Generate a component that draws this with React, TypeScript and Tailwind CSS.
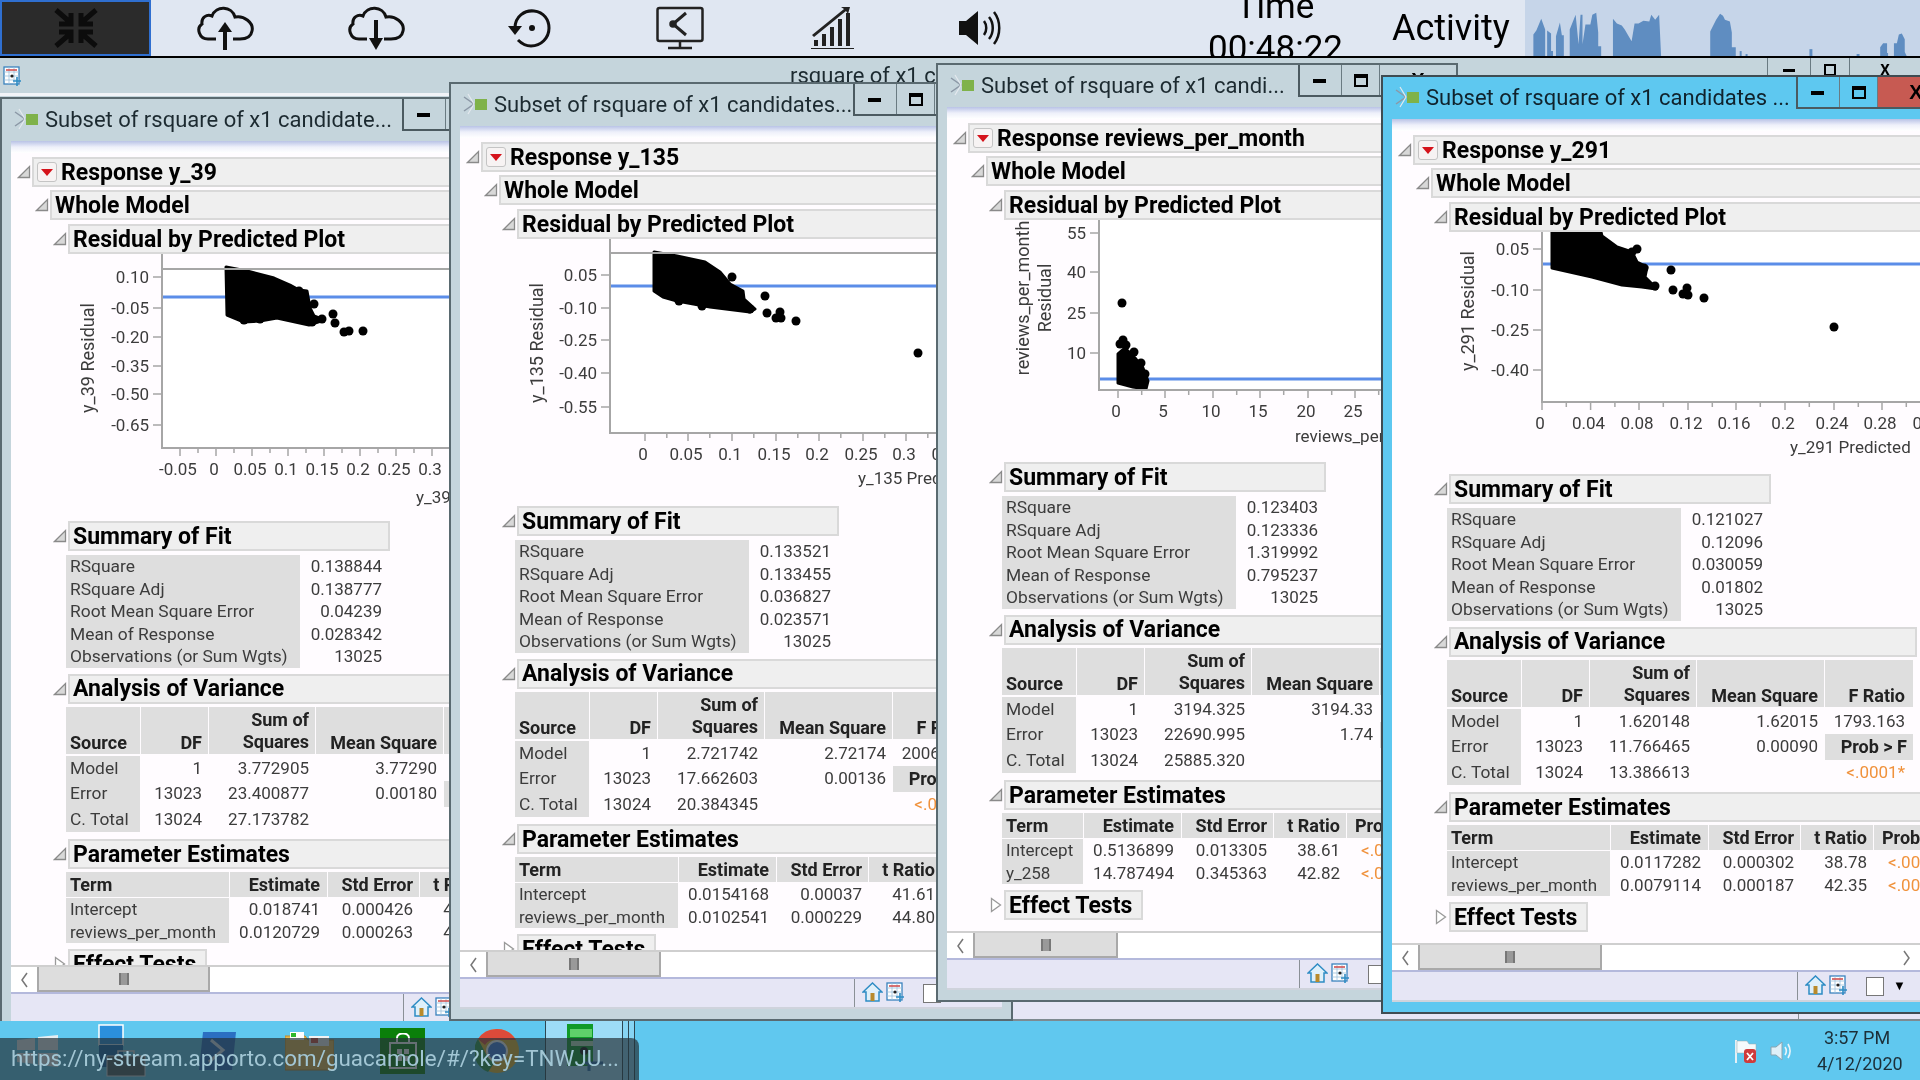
import type { ReactNode } from "react";

type Tick = { label: string; at: number };

type PlotProps = {
  svgH: number;
  left: number;
  top: number;
  h: number;
  blueY: number;
  yTicks: Tick[];
  xTicks: Tick[];
  xStep: number;
  xLabel: string;
  xLabelX: number;
  xLabelDy: number;
  yLabels: { text: string; x: number; y: number }[];
  blob: string;
  dots: number[][];
};

type WinData = {
  title: string;
  response: string;
  pos: string;
  titleW: string;
  statusW: string;
  active?: boolean;
  thumb: string;
  plot: PlotProps;
  fit: string[];
  anova: string[][];
  termCols: string;
  params: string[][];
};

const fitLabels = ["RSquare", "RSquare Adj", "Root Mean Square Error", "Mean of Response", "Observations (or Sum Wgts)"];

const ticks = (list: [string, number][]): Tick[] => list.map(([label, at]) => ({ label, at }));

const windows: WinData[] = [
  {
    title: "Subset of rsquare of x1 candidate...",
    response: "Response y_39",
    pos: "left-0 top-[39px] w-[562px]",
    titleW: "w-[400px]",
    statusW: "w-[393px]",
    thumb: "w-[173px]",
    plot: {
      svgH: 267, left: 151, top: 15, h: 179, blueY: 28,
      yTicks: ticks([["0.10", 8], ["-0.05", 39], ["-0.20", 68], ["-0.35", 97], ["-0.50", 125], ["-0.65", 156]]),
      xTicks: ticks([["-0.05", 18], ["0", 54], ["0.05", 90], ["0.1", 126], ["0.15", 162], ["0.2", 198], ["0.25", 234], ["0.3", 270]]),
      xStep: 36,
      xLabel: "y_39 Predicted",
      xLabelX: 254,
      xLabelDy: 55,
      yLabels: [{ text: "y_39 Residual", x: -74, y: 89 }],
      blob: "64,-2 85,2 112,9 128,16 137,21 145,22 148,39 152,47 162,51 147,56 115,49 98,52 82,53 65,46",
      dots: [[152, 35], [171, 45], [173, 54], [182, 63], [187, 62], [201, 62], [137, 22], [150, 53], [82, 51], [98, 50], [160, 50]],
    },
    fit: ["0.138844", "0.138777", "0.04239", "0.028342", "13025"],
    anova: [["Model", "1", "3.772905", "3.77290", "2096.100"], ["Error", "13023", "23.400877", "0.00180", "Prob > F"], ["C. Total", "13024", "27.173782", "", "<.0001*"]],
    termCols: "grid-cols-[163px_97px_91px_72px_100px]",
    params: [["Intercept", "0.018741", "0.000426", "43.99", "<.0001*"], ["reviews_per_month", "0.0120729", "0.000263", "45.90", "<.0001*"]],
  },
  {
    title: "Subset of rsquare of x1 candidates...",
    response: "Response y_135",
    pos: "left-[449px] top-[24px] w-[564px]",
    titleW: "w-[402px]",
    statusW: "w-[395px]",
    thumb: "w-[175px]",
    plot: {
      svgH: 267, left: 150, top: 14, h: 180, blueY: 33,
      yTicks: ticks([["0.05", 22], ["-0.10", 55], ["-0.25", 87], ["-0.40", 120], ["-0.55", 154]]),
      xTicks: ticks([["0", 35], ["0.05", 78], ["0.1", 122], ["0.15", 166], ["0.2", 209], ["0.25", 253], ["0.3", 296], ["0.35", 340]]),
      xStep: 43.6,
      xLabel: "y_135 Predicted",
      xLabelX: 248,
      xLabelDy: 51,
      yLabels: [{ text: "y_135 Residual", x: -73, y: 90 }],
      blob: "44,-1 67,3 95,9 110,19 120,31 133,38 134,46 145,56 140,59 100,54 67,48 53,44 44,38",
      dots: [[122, 24], [155, 43], [157, 60], [170, 59], [166, 65], [171, 65], [186, 68], [308, 100], [140, 56], [92, 53], [69, 48]],
    },
    fit: ["0.133521", "0.133455", "0.036827", "0.023571", "13025"],
    anova: [["Model", "1", "2.721742", "2.72174", "2006.437"], ["Error", "13023", "17.662603", "0.00136", "Prob > F"], ["C. Total", "13024", "20.384345", "", "<.0001*"]],
    termCols: "grid-cols-[163px_97px_91px_72px_100px]",
    params: [["Intercept", "0.0154168", "0.00037", "41.61", "<.0001*"], ["reviews_per_month", "0.0102541", "0.000229", "44.80", "<.0001*"]],
  },
  {
    title: "Subset of rsquare of x1 candi...",
    response: "Response reviews_per_month",
    pos: "left-[936px] top-[5px] w-[522px]",
    titleW: "w-[360px]",
    statusW: "w-[353px]",
    thumb: "w-[145px]",
    plot: {
      svgH: 242, left: 152, top: 0, h: 170, blueY: 159,
      yTicks: ticks([["55", 13], ["40", 52], ["25", 93], ["10", 133]]),
      xTicks: ticks([["0", 19], ["5", 66], ["10", 114], ["15", 161], ["20", 209], ["25", 256]]),
      xStep: 47.4,
      xLabel: "reviews_per_month Predicted",
      xLabelX: 196,
      xLabelDy: 52,
      yLabels: [{ text: "reviews_per_month", x: -76, y: 78 }, { text: "Residual", x: -54, y: 78 }],
      blob: "19,134 26,128 36,138 44,148 49,161 47,169 34,167 19,163",
      dots: [[23, 83], [24, 120], [21, 124], [27, 125], [35, 132], [42, 143], [46, 154]],
    },
    fit: ["0.123403", "0.123336", "1.319992", "0.795237", "13025"],
    anova: [["Model", "1", "3194.325", "3194.33", "1629.800"], ["Error", "13023", "22690.995", "1.74", "Prob > F"], ["C. Total", "13024", "25885.320", "", "<.0001*"]],
    termCols: "grid-cols-[81px_97px_91px_72px_100px]",
    params: [["Intercept", "0.5136899", "0.013305", "38.61", "<.0001*"], ["y_258", "14.787494", "0.345363", "42.82", "<.0001*"]],
  },
  {
    title: "Subset of rsquare of x1 candidates ...",
    response: "Response y_291",
    pos: "left-[1381px] top-[17px] w-[550px]",
    titleW: "w-[413px]",
    statusW: "w-[406px]",
    active: true,
    thumb: "w-[184px]",
    plot: {
      svgH: 242, left: 150, top: 0, h: 170, blueY: 32,
      yTicks: ticks([["0.05", 17], ["-0.10", 58], ["-0.25", 98], ["-0.40", 138]]),
      xTicks: ticks([["0", 0], ["0.04", 48.6], ["0.08", 97], ["0.12", 146], ["0.16", 194], ["0.2", 243], ["0.24", 292], ["0.28", 340], ["0.32", 389]]),
      xStep: 48.6,
      xLabel: "y_291 Predicted",
      xLabelX: 248,
      xLabelDy: 51,
      yLabels: [{ text: "y_291 Residual", x: -74, y: 79 }],
      blob: "10,0 59,0 60,4 75,15 90,20 95,30 105,35 103,45 113,55 114,57 100,55 80,53 50,45 10,36",
      dots: [[95, 17], [90, 20], [129, 38], [131, 58], [145, 56], [141, 62], [146, 63], [162, 66], [292, 95], [113, 54], [102, 36]],
    },
    fit: ["0.121027", "0.12096", "0.030059", "0.01802", "13025"],
    anova: [["Model", "1", "1.620148", "1.62015", "1793.163"], ["Error", "13023", "11.766465", "0.00090", "Prob > F"], ["C. Total", "13024", "13.386613", "", "<.0001*"]],
    termCols: "grid-cols-[163px_97px_91px_72px_100px]",
    params: [["Intercept", "0.0117282", "0.000302", "38.78", "<.0001*"], ["reviews_per_month", "0.0079114", "0.000187", "42.35", "<.0001*"]],
  },
];

function Disclosure({ open = true }: { open?: boolean }) {
  return (
    <svg width="14" height="16" viewBox="0 0 14 16" className="shrink-0">
      {open ? (
        <path d="M12.5 2.5 V13.5 H1.5 Z" fill="#d8d8d8" stroke="#8a8a8a" strokeWidth="1.3" />
      ) : (
        <path d="M2.5 1.5 L11.5 8 L2.5 14.5 Z" fill="#fff" stroke="#9a9a9a" strokeWidth="1.3" />
      )}
    </svg>
  );
}

function Section({ title, indent, width, open = true, menu, className = "" }: { title: string; indent: string; width: string; open?: boolean; menu?: boolean; className?: string }) {
  return (
    <div className={`flex items-center gap-[1px] ${indent} ${className}`}>
      <Disclosure open={open} />
      <div className={`flex h-[30px] items-center gap-[4px] whitespace-nowrap border-2 border-[#d9d9d9] bg-[#efefef] pl-[3px] text-[23px] font-bold leading-none text-black ${width}`}>
        {menu && (
          <span className="flex h-[20px] w-[20px] shrink-0 items-center justify-center rounded-[3px] border border-[#c4c4c4] bg-[#f7f3f3]">
            <svg width="12" height="7" viewBox="0 0 12 7">
              <path d="M0 0 H12 L6 7 Z" fill="#d5131b" />
            </svg>
          </span>
        )}
        <span>{title}</span>
      </div>
    </div>
  );
}

function Plot({ svgH, left, top, h, blueY, yTicks, xTicks, xStep, xLabel, xLabelX, xLabelDy, yLabels, blob, dots }: PlotProps) {
  const minors = xTicks.map((t) => t.at + xStep / 2);
  return (
    <svg width="540" height={svgH} className="block shrink-0 text-[17px]">
      <g transform={`translate(${left} ${top})`}>
        <rect x="0" y="0" width="400" height={h} fill="#ffffff" />
        <line x1="0" x2="400" y1={blueY} y2={blueY} stroke="#5b8de8" strokeWidth="3" />
        <polygon points={blob} fill="#000" stroke="#000" strokeWidth="3" strokeLinejoin="round" />
        {dots.map(([x, y]) => (
          <circle key={`${x}-${y}`} cx={x} cy={y} r="4.5" fill="#000" />
        ))}
        <path d={`M0 -${top} V${h} H400`} fill="none" stroke="#a6a6a6" strokeWidth="2" />
        {top > 0 && <line x1="0" x2="400" y1="0" y2="0" stroke="#a6a6a6" strokeWidth="2" />}
        {yTicks.map((t) => (
          <g key={t.label}>
            <line x1="-9" x2="0" y1={t.at} y2={t.at} stroke="#a6a6a6" strokeWidth="1.5" />
            <text x="-13" y={t.at + 6} textAnchor="end" fill="#3c3c3c">{t.label}</text>
          </g>
        ))}
        {xTicks.map((t) => (
          <g key={t.label}>
            <line x1={t.at} x2={t.at} y1={h} y2={h + 8} stroke="#a6a6a6" strokeWidth="1.5" />
            <text x={t.at - 2} y={h + 27} textAnchor="middle" fill="#3c3c3c">{t.label}</text>
          </g>
        ))}
        {minors.map((x) => (
          <line key={x} x1={x} x2={x} y1={h} y2={h + 5} stroke="#a6a6a6" strokeWidth="1.5" />
        ))}
        <text x={xLabelX} y={h + xLabelDy} fill="#3c3c3c">{xLabel}</text>
        {yLabels.map((l) => (
          <text key={l.text} transform={`translate(${l.x + 6} ${l.y}) rotate(-90)`} textAnchor="middle" fill="#3c3c3c" className="text-[18px]">{l.text}</text>
        ))}
      </g>
    </svg>
  );
}

function FitTable({ values }: { values: string[] }) {
  return (
    <div className="ml-[55px] mt-[4px] grid w-fit grid-cols-[234px_82px] text-[17.4px] leading-[22.6px] text-[#3c3c3c]">
      {fitLabels.map((label, i) => (
        <div key={label} className="contents">
          <div className="h-[22.6px] whitespace-nowrap bg-[#dedede] pl-[4px]">{label}</div>
          <div className="h-[22.6px] text-right text-[17px]">{values[i]}</div>
        </div>
      ))}
    </div>
  );
}

function AnovaTable({ rows }: { rows: string[][] }) {
  return (
    <div className="ml-[55px] mt-[3px] text-[18px] text-[#3c3c3c]">
      <div className="grid w-fit grid-cols-[74px_67px_106px_127px_88px] gap-x-[1px] font-bold leading-[22px] text-[#222]">
        <div className="flex h-[47px] items-end bg-[#dedede] pl-[4px]">Source</div>
        <div className="flex h-[47px] items-end justify-end bg-[#dedede] pr-[6px]">DF</div>
        <div className="h-[47px] bg-[#dedede] pr-[6px] pt-[2px] text-right">Sum of<br />Squares</div>
        <div className="flex h-[47px] items-end justify-end bg-[#dedede] pr-[6px]">Mean Square</div>
        <div className="flex h-[47px] items-end justify-end bg-[#dedede] pr-[8px]">F Ratio</div>
      </div>
      <div className="mt-[2px] grid w-fit grid-cols-[74px_67px_106px_127px_88px] gap-x-[1px] text-[17px] leading-[25.4px]">
        {rows.map((r) => (
          <div key={r[0]} className="contents">
            <div className="h-[25.4px] bg-[#dedede] pl-[4px] text-[17.4px]">{r[0]}</div>
            <div className="h-[25.4px] pr-[6px] text-right">{r[1]}</div>
            <div className="h-[25.4px] pr-[6px] text-right">{r[2]}</div>
            <div className="h-[25.4px] pr-[6px] text-right">{r[3]}</div>
            {r[4] === "Prob > F" ? (
              <div className="h-[25.4px] bg-[#dedede] pr-[6px] text-right text-[18px] font-bold text-[#222]">{r[4]}</div>
            ) : r[4].startsWith("<") ? (
              <div className="h-[25.4px] pr-[8px] text-right text-[#f0923c]">{r[4]}</div>
            ) : (
              <div className="h-[25.4px] pr-[8px] text-right">{r[4]}</div>
            )}
          </div>
        ))}
      </div>
    </div>
  );
}

function ParamTable({ cols, rows }: { cols: string; rows: string[][] }) {
  return (
    <div className="ml-[55px] mt-[3px] text-[18px] text-[#3c3c3c]">
      <div className={`grid w-fit gap-x-[1px] font-bold leading-[25px] text-[#222] ${cols}`}>
        <div className="h-[25px] bg-[#dedede] pl-[4px]">Term</div>
        <div className="h-[25px] bg-[#dedede] pr-[7px] text-right">Estimate</div>
        <div className="h-[25px] bg-[#dedede] pr-[6px] text-right">Std Error</div>
        <div className="h-[25px] bg-[#dedede] pr-[6px] text-right">t Ratio</div>
        <div className="h-[25px] whitespace-nowrap bg-[#dedede] pl-[8px]">Prob&gt;|t|</div>
      </div>
      <div className={`mt-[1px] grid w-fit gap-x-[1px] text-[17px] leading-[22.6px] ${cols}`}>
        {rows.map((r) => (
          <div key={r[0]} className="contents">
            <div className="h-[22.6px] whitespace-nowrap bg-[#dedede] pl-[4px]">{r[0]}</div>
            <div className="h-[22.6px] pr-[7px] text-right">{r[1]}</div>
            <div className="h-[22.6px] pr-[6px] text-right">{r[2]}</div>
            <div className="h-[22.6px] pr-[6px] text-right">{r[3]}</div>
            <div className="h-[22.6px] pl-[14px] text-[#f0923c]">{r[4]}</div>
          </div>
        ))}
      </div>
    </div>
  );
}

function ReportIcon() {
  return (
    <svg width="26" height="24" viewBox="0 0 26 24" className="shrink-0">
      <path d="M1 5 L11 12 L1 19" fill="none" stroke="#8c98a6" strokeWidth="1.5" />
      <path d="M5 2 L11 12 L5 22" fill="none" stroke="#e4e9ee" strokeWidth="1.2" />
      <rect x="12" y="7" width="12" height="11" fill="#7fb24a" />
    </svg>
  );
}

function HomeIcon() {
  return (
    <svg width="21" height="20" viewBox="0 0 21 20" className="shrink-0">
      <path d="M10.5 1 L20 10 H17 V19 H4 V10 H1 Z" fill="#dff0fa" stroke="#2e8cc4" strokeWidth="1.5" />
      <rect x="8.5" y="11" width="4" height="8" fill="#b98a2a" />
    </svg>
  );
}

function GridIcon({ className = "" }: { className?: string }) {
  return (
    <svg width="20" height="20" viewBox="0 0 20 20" className={`shrink-0 ${className}`}>
      <rect x="1" y="1" width="15" height="17" fill="#fff" stroke="#3b83bd" strokeWidth="1.3" />
      <path d="M1 6 H16 M1 10 H16 M1 14 H16 M6 1 V18 M11 1 V18" stroke="#9cc0dc" strokeWidth="0.8" />
      <path d="M3 4 H14" stroke="#d05050" strokeWidth="1.6" />
      <circle cx="9" cy="10" r="1.6" fill="#222" />
      <path d="M14 11 V20 M10 15 H18" stroke="#2e8cc4" strokeWidth="1.6" />
    </svg>
  );
}

function WinButtons({ active }: { active?: boolean }) {
  return (
    <div className={`flex h-[32px] shrink-0 border-b-2 border-l-2 border-r-2 border-[#4b5a60] ${active ? "bg-[#5ec8f0]" : "bg-[#c5d5dc]"}`}>
      <div className="flex w-[42px] items-center justify-center border-r border-[#6a7b82] pr-[3px]">
        <span className="mt-[2px] h-[4px] w-[13px] bg-black" />
      </div>
      <div className="flex w-[38px] items-center justify-center border-r border-[#6a7b82]">
        <span className="h-[13px] w-[14px] border-2 border-t-4 border-black" />
      </div>
      <div className={`flex w-[76px] items-center justify-center text-[20px] font-bold text-black ${active ? "bg-[#c75a52]" : ""}`}>
        <span className="font-['Liberation_Sans',sans-serif]">X</span>
      </div>
    </div>
  );
}

function JmpWindow({ w }: { w: WinData }) {
  return (
    <div className={`absolute h-[939px] border-2 ${w.pos} ${w.active ? "border-[#3f4c52] bg-[#5ec8f0]" : "border-[#5a6a70] bg-[#c5d5dc]"}`}>
      <div className="flex h-[42px] items-start overflow-hidden">
        <div className={`flex h-[40px] shrink-0 items-center gap-[5px] overflow-hidden whitespace-nowrap pl-[12px] text-[22px] ${w.titleW} ${w.active ? "text-[#10222c]" : "text-[#1c2a30]"}`}>
          <ReportIcon />
          <span>{w.title}</span>
        </div>
        <WinButtons active={w.active} />
      </div>
      <div className="mx-[9px] h-[851px] bg-white">
        <div className="h-[12px] bg-gradient-to-b from-[#b9c3e6] via-[#eef0fa] to-white" />
        <div className="h-[812px] overflow-hidden bg-[#fffcff]">
          <div className="w-[539px] pt-[4px]">
            <Section title={w.response} indent="pl-[6px]" width="flex-1" menu />
            <Section title="Whole Model" indent="pl-[24px] mt-[3px]" width="flex-1" />
            <Section title="Residual by Predicted Plot" indent="pl-[42px] mt-[4px]" width="flex-1" />
            <Plot {...w.plot} />
            <Section title="Summary of Fit" indent="pl-[42px]" width="w-[322px]" />
            <FitTable values={w.fit} />
            <Section title="Analysis of Variance" indent="pl-[42px] mt-[6px]" width="w-[468px]" />
            <AnovaTable rows={w.anova} />
            <Section title="Parameter Estimates" indent="pl-[42px] mt-[7px]" width="flex-1" />
            <ParamTable cols={w.termCols} rows={w.params} />
            <Section title="Effect Tests" indent="pl-[42px] mt-[6px]" width="w-[139px]" open={false} />
          </div>
        </div>
        <div className="flex h-[27px] border-t-2 border-[#cfcfcf] bg-white">
          <div className="flex w-[26px] items-center justify-center text-[#666]">
            <svg width="8" height="16" viewBox="0 0 8 16"><path d="M7 1 L2 8 L7 15" fill="none" stroke="#777" strokeWidth="1.5" /></svg>
          </div>
          <div className={`flex h-[25px] items-center justify-center border-x-2 border-b-2 border-[#a9a9a9] bg-[#dddddd] ${w.thumb}`}>
            <span className="h-[12px] w-[10px] border-x-2 border-[#777] bg-[#999]" />
          </div>
          <div className="flex-1" />
          <div className="flex w-[26px] items-center justify-center">
            <svg width="8" height="16" viewBox="0 0 8 16"><path d="M1 1 L6 8 L1 15" fill="none" stroke="#777" strokeWidth="1.5" /></svg>
          </div>
        </div>
      </div>
      <div className="mx-[9px] h-[32px] border-t-2 border-b-2 border-t-[#b4b9dc] border-b-[#cfd3dc] bg-[#e6e6f5]">
        <div className="flex h-full">
          <div className={`h-full shrink-0 border-r border-[#8a9096] ${w.statusW}`} />
          <div className="flex h-full items-start pl-[7px] pt-[3px]">
            <HomeIcon />
            <GridIcon className="ml-[3px]" />
            <span className="ml-[17px] mt-[2px] h-[19px] w-[18px] shrink-0 border border-[#777] bg-white" />
            <span className="ml-[9px] mt-[4px] text-[13px] leading-none text-black">▼</span>
          </div>
        </div>
      </div>
    </div>
  );
}

const activityPaths = [
  "M0 57 V35 L3 31 L8 19 L12 30 V57 Z",
  "M14 57 V31 L18 34 V52 H20 V57 Z",
  "M23 57 V37 L27 23 L29 36 H31 V57 Z",
  "M37 57 V30 L43 15 L46 45 L48 15 H50 V45 L53 25 H58 L60 15 L64 13 L66 33 V47 H69 V57 Z",
  "M81 57 V19 L85 24 L90 26 L93 30 L97 37 L100 42 L103 24 L107 24 L112 21 L118 22 L120 15 L124 20 L128 15 L130 57 Z",
  "M180 57 V32 L186 20 L190 14 L193 16 L195 20 L200 22 L202 33 V48 H206 V57 Z",
  "M210 57 V52 H212 V57 Z",
  "M216 57 V55 H218 V57 Z",
  "M281 57 V50 H284 V57 Z",
  "M329 57 V55 H332 V57 Z",
  "M353 57 V48 L356 44 H360 V54 H361 V57 Z",
  "M367 57 V44 H370 L372 35 L375 34 L378 40 V53 L380 57 Z",
];

function TopCell({ w, children }: { w: string; children: ReactNode }) {
  return <div className={`flex h-full shrink-0 items-center justify-center ${w}`}>{children}</div>;
}

function TopBar() {
  return (
    <div className="flex h-[58px] shrink-0 items-center overflow-hidden border-b-2 border-black bg-[#e0e7f2] text-[35px] text-black">
      <div className="flex h-full w-[151px] shrink-0 items-center justify-center border-2 border-[#2f6fd0] bg-[#2b2b2b]">
        <svg width="46" height="40" viewBox="0 0 46 40" fill="none" stroke="#0c0c0c" strokeWidth="5">
          <path d="M3 2 L18 15 M18 5 V16 H6" />
          <path d="M43 2 L28 15 M28 5 V16 H40" />
          <path d="M3 38 L18 25 M18 35 V24 H6" />
          <path d="M43 38 L28 25 M28 35 V24 H40" />
        </svg>
      </div>
      <TopCell w="w-[149px]">
        <svg width="60" height="44" viewBox="0 0 60 44" fill="none" stroke="#111" strokeWidth="3">
          <path d="M20 33 H12 C3 33 0 22 6 18 C5 11 11 8 16 10 C20 -1 36 0 39 11 C48 9 58 17 56 25 C55 31 50 33 44 33 H37" />
          <path d="M29 44 V23" strokeWidth="4" />
          <path d="M22 26 L29 16 L36 26 Z" fill="#111" strokeWidth="0" />
        </svg>
      </TopCell>
      <TopCell w="w-[153px]">
        <svg width="60" height="44" viewBox="0 0 60 44" fill="none" stroke="#111" strokeWidth="3">
          <path d="M20 33 H12 C3 33 0 22 6 18 C5 11 11 8 16 10 C20 -1 36 0 39 11 C48 9 58 17 56 25 C55 31 50 33 44 33 H37" />
          <path d="M29 14 V34" strokeWidth="4" />
          <path d="M22 32 L29 44 L36 32 Z" fill="#111" strokeWidth="0" />
        </svg>
      </TopCell>
      <TopCell w="w-[152px]">
        <svg width="44" height="40" viewBox="0 0 44 40" fill="none" stroke="#111" strokeWidth="3">
          <path d="M8 20 C8 8 18 2 27 3 C37 4 42 12 42 20 C42 30 34 38 24 38 C18 38 14 35 11 32" />
          <path d="M1 18 H15 L8 27 Z" fill="#111" strokeWidth="0" />
          <circle cx="25" cy="20" r="3" fill="#111" strokeWidth="0" />
        </svg>
      </TopCell>
      <TopCell w="w-[150px]">
        <svg width="48" height="44" viewBox="0 0 48 44" fill="none" stroke="#222" strokeWidth="2.5">
          <rect x="1.5" y="2" width="45" height="33" rx="2" />
          <path d="M30 7 L17 18 L30 29" strokeWidth="3" />
          <circle cx="17" cy="18" r="2.5" fill="#222" />
          <path d="M24 35 V41 M12 42 H36" />
        </svg>
      </TopCell>
      <TopCell w="w-[154px]">
        <svg width="44" height="42" viewBox="0 0 44 42" fill="#222">
          <rect x="4" y="33" width="4" height="6" />
          <rect x="12" y="27" width="4" height="12" />
          <rect x="20" y="20" width="4" height="19" />
          <rect x="28" y="12" width="4" height="27" />
          <rect x="36" y="6" width="4" height="33" />
          <path d="M1 41 H44 V42 H1 Z M2 28 L34 2 L31 0 L40 0 L38 7 L36 4 L4 30 Z" />
        </svg>
      </TopCell>
      <TopCell w="w-[144px]">
        <svg width="44" height="40" viewBox="0 0 44 40" fill="none" stroke="#111" strokeWidth="2.5">
          <path d="M0 13 H7 L19 3 V37 L7 27 H0 Z" fill="#111" strokeWidth="0" />
          <path d="M25 13 C28 17 28 23 25 27" />
          <path d="M30 9 C35 15 35 25 30 31" />
          <path d="M35 4 C42 13 42 27 35 36" />
        </svg>
      </TopCell>
      <div className="w-[339px] shrink-0 pl-[155px] leading-[42px]">
        <div className="w-[134px] text-center">Time</div>
        <div className="w-[134px] text-center">00:48:22</div>
      </div>
      <div className="w-[133px] shrink-0 text-[36px]">Activity</div>
      <svg className="h-full w-[395px] shrink-0 bg-[#c6d5e9]" viewBox="-5 0 395 57">
        {activityPaths.map((d) => (
          <path key={d} d={d} fill="#5f8dc1" />
        ))}
      </svg>
    </div>
  );
}

function BackWindow() {
  return (
    <div className="flex h-[963px] shrink-0 flex-col bg-[#c5d5dc]">
      <div className="flex h-[35px] shrink-0 items-start justify-between">
        <div className="flex h-full items-center pl-[3px]">
          <GridIcon />
          <span className="ml-[767px] whitespace-nowrap text-[22px] text-[#1c2a30]">rsquare of x1 candidates</span>
        </div>
        <div className="flex h-[24px] w-[153px] text-[15px] font-bold leading-none text-black">
          <div className="flex w-[43px] items-center justify-center border-l border-[#6a7b82]">
            <span className="h-[3px] w-[12px] bg-black" />
          </div>
          <div className="flex w-[39px] items-center justify-center border-l border-[#6a7b82]">
            <span className="h-[12px] w-[12px] border-2 border-black" />
          </div>
          <div className="flex flex-1 items-center justify-center border-l border-[#6a7b82]">X</div>
        </div>
      </div>
      <div className="h-[3px] shrink-0 bg-[#f2f4f8]" />
      <div className="flex-1" />
      <div className="flex h-[20px] shrink-0 border-b-2 border-[#7e8a90] bg-[#e6e6f5] pl-[1798px]">
        <span className="h-full border-l border-[#8a9096]" />
      </div>
    </div>
  );
}

function TaskIcons() {
  return (
    <div className="relative flex h-full items-center">
      <div className="w-[17px] shrink-0" />
      <svg width="41" height="32" viewBox="0 0 41 32" className="shrink-0">
        <path d="M0 5 L18 3 V15 H0 Z M21 2 L41 0 V15 H21 Z M0 18 H18 V29 L0 27 Z M21 18 H41 V32 L21 30 Z" fill="#e6eef2" />
      </svg>
      <div className="w-[40px] shrink-0" />
      <svg width="48" height="54" viewBox="0 0 48 54" className="shrink-0">
        <rect x="1" y="1" width="24" height="20" fill="#2b8fdc" stroke="#fff" strokeWidth="1.5" />
        <rect x="1" y="21" width="24" height="22" fill="#1565a8" />
        <rect x="9" y="32" width="38" height="20" fill="#4a5a60" stroke="#ddd" />
        <path d="M20 32 V27 H36 V32" fill="none" stroke="#ddd" strokeWidth="1.5" />
      </svg>
      <div className="w-[53px] shrink-0" />
      <svg width="37" height="42" viewBox="0 0 37 42" className="shrink-0">
        <path d="M4 2 H37 L33 40 H0 Z" fill="#2b6fc2" />
        <path d="M12 10 L24 20 L10 32" fill="none" stroke="#d8e4f2" strokeWidth="3" />
      </svg>
      <div className="w-[49px] shrink-0" />
      <svg width="49" height="42" viewBox="0 0 49 42" className="shrink-0">
        <path d="M0 6 H20 L23 10 H49 V40 H0 Z" fill="#e6b84e" stroke="#c08a28" />
        <rect x="5" y="2" width="14" height="8" fill="#fff" />
        <rect x="6" y="3" width="5" height="4" fill="#2eb82e" />
        <rect x="24" y="6" width="20" height="10" fill="#f2f2f2" />
        <rect x="26" y="8" width="7" height="5" fill="#d84a3a" />
      </svg>
      <div className="w-[46px] shrink-0" />
      <div className="flex h-[46px] w-[45px] shrink-0 items-center justify-center bg-[#0a7f0a]">
        <svg width="28" height="36" viewBox="0 0 28 36" fill="none">
          <path d="M8 10 V5 C8 -1 20 -1 20 5 V10" stroke="#fff" strokeWidth="2" />
          <path d="M1 10 H27 V35 H1 Z" stroke="#fff" strokeWidth="2" />
          <path d="M8 16 H13 V21 H8 Z M15 16 H20 V21 H15 Z M8 23 H13 V28 H8 Z M15 23 H20 V28 H15 Z" fill="#fff" />
        </svg>
      </div>
      <div className="w-[50px] shrink-0" />
      <svg width="44" height="46" viewBox="0 0 44 46" className="shrink-0">
        <circle cx="22" cy="23" r="22" fill="#e8b92e" />
        <path d="M22 1 A22 22 0 0 1 41 12 H22 A11 11 0 0 0 10 17 L3 11 A22 22 0 0 1 22 1 Z" fill="#dc4a3a" />
        <path d="M3 11 L12 28 A11 11 0 0 0 20 34 L13 44 A22 22 0 0 1 3 11 Z" fill="#2a9a4a" />
        <circle cx="22" cy="23" r="10" fill="#3d7ee0" stroke="#fff" strokeWidth="2" />
      </svg>
      <div className="w-[26px] shrink-0" />
      <div className="flex h-full w-[78px] shrink-0 items-center justify-center border-x border-[#2d4652] bg-[#9ddcf7]">
        <svg width="38" height="48" viewBox="0 0 38 48" className="mb-[8px]">
          <rect x="2" y="1" width="26" height="42" fill="#109a28" />
          <rect x="5" y="6" width="22" height="8" fill="#5fd06a" />
          <rect x="6" y="18" width="22" height="5" fill="#bfe8c2" />
          <circle cx="19" cy="28" r="4" fill="#111" />
          <path d="M24 48 V34 M20 40 H38" stroke="#2a70b0" strokeWidth="3" />
        </svg>
      </div>
      <div className="h-full w-[6px] shrink-0 border-r border-[#2d4652] bg-[#86d4f4]" />
      <div className="h-full w-[6px] shrink-0 border-r border-[#2d4652] bg-[#86d4f4]" />
    </div>
  );
}

function Taskbar() {
  return (
    <div className="relative flex h-[59px] shrink-0 items-center justify-between bg-[#60c8ef]">
      <TaskIcons />
      <div className="flex items-center pr-[23px]">
        <svg width="24" height="24" viewBox="0 0 24 24">
          <path d="M3 1 V24" stroke="#e4f0f6" strokeWidth="2" />
          <path d="M4 2 H14 L16 5 H23 V14 H4 Z" fill="#f5fafc" stroke="#9aa" strokeWidth="0.5" />
          <rect x="11" y="10" width="12" height="14" rx="3" fill="#cf3b3b" />
          <path d="M14 14 L20 21 M20 14 L14 21" stroke="#fff" strokeWidth="1.8" />
        </svg>
        <svg width="24" height="24" viewBox="0 0 24 24" fill="none" stroke="#eaf4f9" strokeWidth="1.6" className="ml-[12px]">
          <path d="M2 8 H7 L13 3 V21 L7 16 H2 Z" fill="#dff0f8" stroke="#8aa4b0" strokeWidth="1" />
          <path d="M16 8 C18 11 18 13 16 16 M19 5 C22 10 22 14 19 19" />
        </svg>
        <div className="ml-[24px] w-[80px] text-center text-[18px] leading-[26px] text-[#1c2f38]">
          <div>3:57 PM</div>
          <div>4/12/2020</div>
        </div>
      </div>
      <div className="absolute bottom-0 left-0 flex h-[42px] w-[639px] items-center overflow-hidden whitespace-nowrap rounded-tr-[8px] bg-[#253239]/70 pl-[11px] text-[22.4px] text-[#a2c6d4]">
        https://ny-stream.apporto.com/guacamole/#/?key=TNWJU...
      </div>
    </div>
  );
}

export default function App() {
  return (
    <div className="flex h-[1080px] w-[1920px] flex-col overflow-hidden font-['Roboto','Noto_Sans',sans-serif] blur-[0.35px]">
      <TopBar />
      <div className="relative h-[963px] shrink-0 overflow-hidden">
        <BackWindow />
        {windows.map((w) => (
          <JmpWindow key={w.response} w={w} />
        ))}
      </div>
      <Taskbar />
    </div>
  );
}
